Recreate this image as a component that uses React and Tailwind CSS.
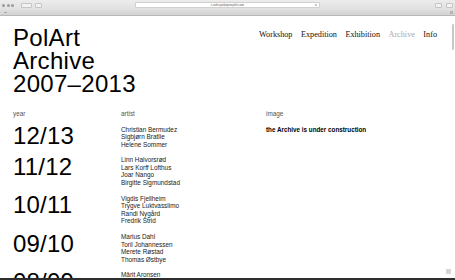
const rows = [
  { year: "12/13", artists: ["Christian Bermudez", "Sigbjørn Bratlie", "Helene Sommer"], image: "the Archive is under construction" },
  { year: "11/12", artists: ["Linn Halvorsrød", "Lars Korff Lofthus", "Joar Nango", "Birgitte Sigmundstad"] },
  { year: "10/11", artists: ["Vigdis Fjellheim", "Trygve Luktvasslimo", "Randi Nygård", "Fredrik Strid"] },
  { year: "09/10", artists: ["Marius Dahl", "Toril Johannessen", "Merete Røstad", "Thomas Østbye"] },
  { year: "08/09", artists: ["Märit Aronsen", "Ane Hjort Guttu", "Jan Freuchen"] },
];

const nav = ["Workshop", "Expedition", "Exhibition", "Archive", "Info"];

const Chrome = () => {
  return (
    <div className="shrink-0 border-b border-[#b9b9b9]">
      {/* title bar */}
      <div className="relative h-[10px] bg-gradient-to-b from-[#ececec] to-[#e0e0e0] flex items-center">
        <div className="flex gap-[1.5px] pl-[2px]">
          <span className="w-[3px] h-[3px] rounded-full bg-[#9c9c9c]" />
          <span className="w-[3px] h-[3px] rounded-full bg-[#9c9c9c]" />
          <span className="w-[3px] h-[3px] rounded-full bg-[#9c9c9c]" />
        </div>
        <div className="ml-[7px] flex h-[5px] w-[11px] border border-[#c4c4c4] rounded-[1px] bg-[#f2f2f2]" />
        <div className="ml-[3px] h-[5px] w-[7px] border border-[#c4c4c4] rounded-[1px] bg-[#f2f2f2]" />
        <div className="ml-[93px] relative h-[6px] w-[185px] bg-white border border-[#d0d0d0] rounded-[1px] flex items-center justify-center">
          <span className="text-[3px] leading-none text-[#555]">c.arkiv.polarprosjekt.com</span>
          <span className="absolute right-[2px] top-[1px] w-[2px] h-[2px] border border-[#999] rounded-full" />
        </div>
        <div className="ml-auto mr-[2px] flex gap-[4px]">
          <div className="h-[5px] w-[7px] border border-[#c4c4c4] rounded-[1px] bg-[#f2f2f2]" />
          <div className="h-[5px] w-[7px] border border-[#c4c4c4] rounded-[1px] bg-[#f2f2f2]" />
        </div>
      </div>
      {/* tab / bookmarks row */}
      <div className="h-[5px] bg-gradient-to-b from-[#dedede] to-[#d2d2d2] flex items-center justify-between px-[4px]">
        <span className="w-[3px] h-[1.5px] bg-[#a5a5a5]" />
        <span className="w-[3px] h-[3px] bg-[#b5b5b5] mr-[-2px]" />
      </div>
    </div>
  );
};

export default function App() {
  return (
    <div
      className="relative w-[455px] h-[280px] overflow-hidden bg-white flex flex-col text-black"
      style={{ fontFamily: '"Liberation Sans", Arial, sans-serif' }}
    >
      <Chrome />

      <div className="relative flex-1 overflow-hidden">
        {/* header */}
        <div className="flex justify-between items-start pl-[13px] pr-[18px]">
          <h1 className="mt-[10px] text-[24px] leading-[23px] tracking-[0.3px] font-normal">
            PolArt
            <br />
            Archive
            <br />
            2007–2013
          </h1>
          <nav
            className="mt-[14px] flex gap-[8.5px] text-[8.2px] leading-[10px]"
            style={{ fontFamily: '"Liberation Serif", "Times New Roman", serif' }}
          >
            {nav.map((n) => (
              <a key={n} className={n === "Archive" ? "text-[#a8a8a8]" : "text-[#111]"}>
                {n}
              </a>
            ))}
          </nav>
        </div>

        {/* table */}
        <div className="mt-[15px] pl-[13px]">
          <div className="grid grid-cols-[108px_145px_1fr] text-[6.4px] leading-[8px] text-[#555]">
            <span>year</span>
            <span>artist</span>
            <span>image</span>
          </div>

          <div className="mt-[7.5px] flex flex-col gap-[8px]">
            {rows.map((r) => (
              <div key={r.year} className="grid grid-cols-[108px_145px_1fr] items-start">
                <div className="text-[24px] leading-[24px] tracking-[0.2px] mt-[-1.5px]">{r.year}</div>
                <div className="flex flex-col text-[6.4px] leading-[7.6px] text-[#222]">
                  {r.artists.map((a) => (
                    <span key={a}>{a}</span>
                  ))}
                </div>
                <div className="text-[6.3px] leading-[7.6px] font-bold pt-[0.5px]">{r.image}</div>
              </div>
            ))}
          </div>
        </div>

        {/* scrollbar */}
        <div className="absolute right-[1px] top-[8px] w-[2px] h-[26px] rounded-full bg-[#c8c8c8]" />
        <div className="absolute right-[4px] bottom-[4px] w-[5px] h-[5px] bg-[#d6d6d6]" />
      </div>

      <div className="h-[2px] shrink-0 bg-[#2e2e2e]" />
    </div>
  );
}
